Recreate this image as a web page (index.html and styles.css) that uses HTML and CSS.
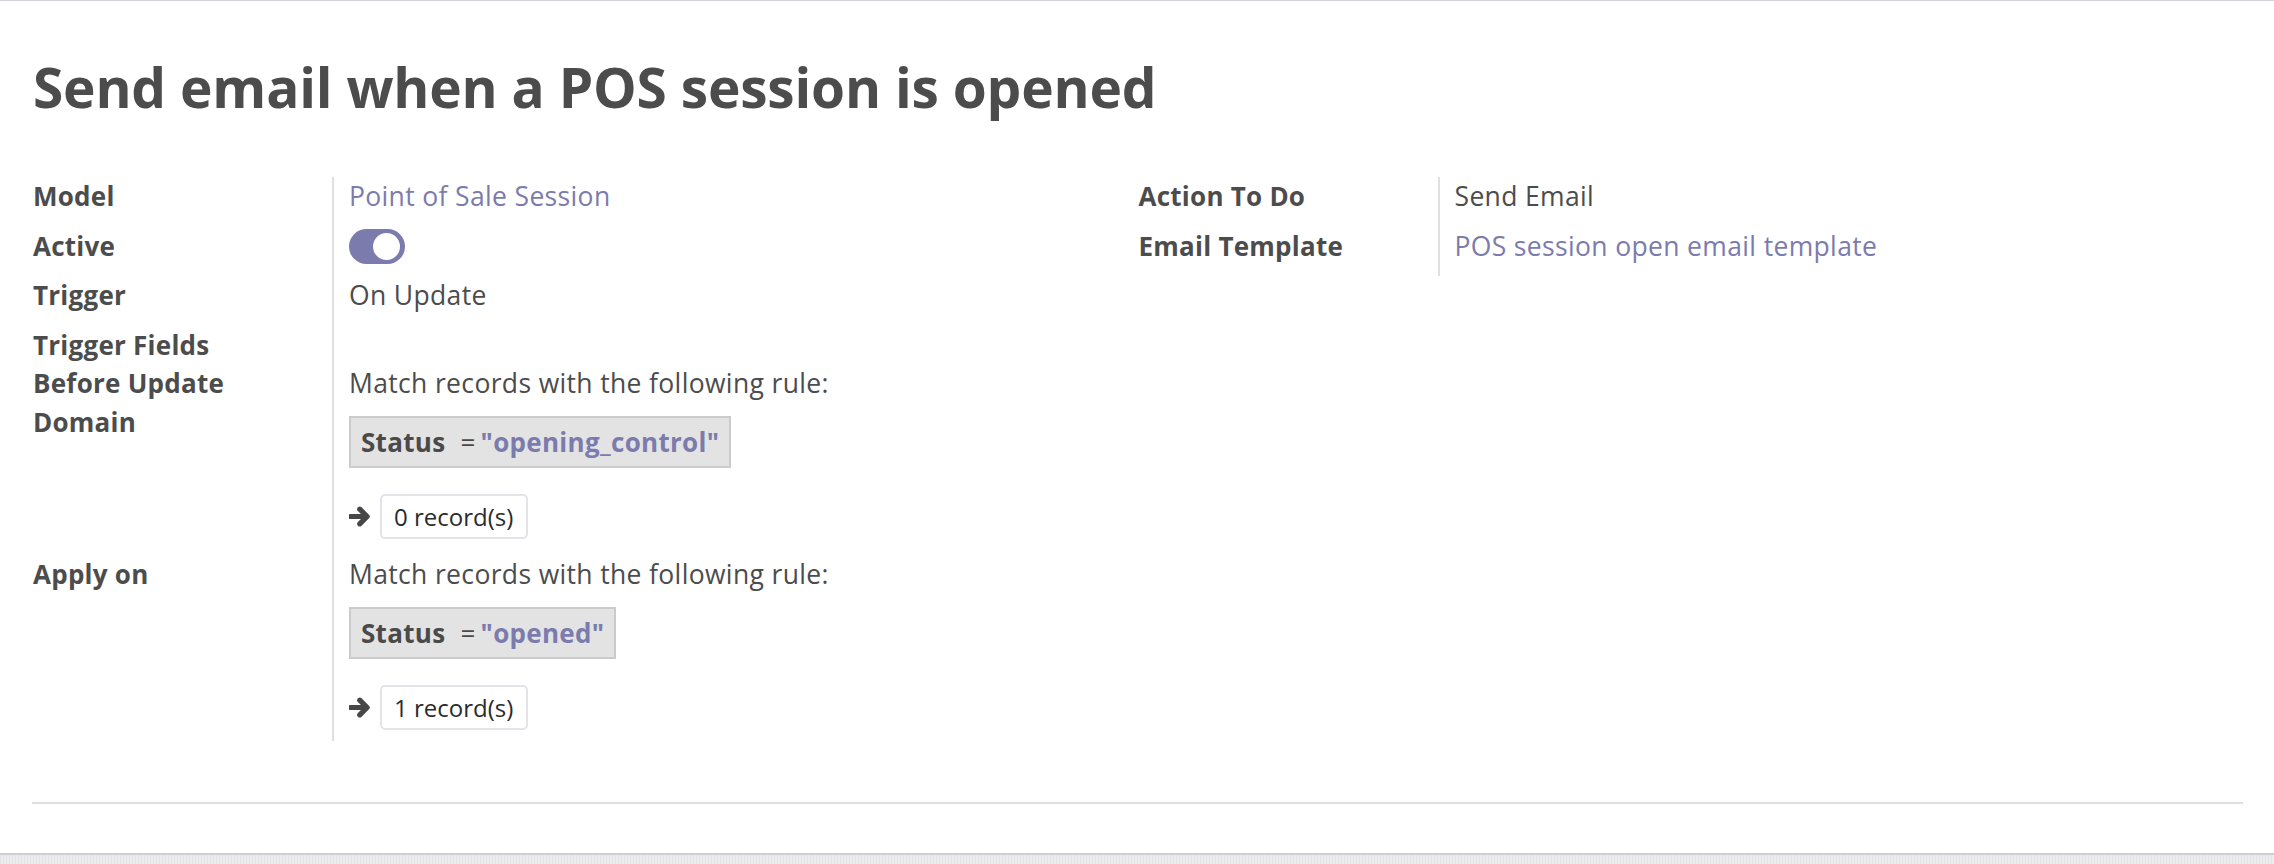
FILE: index.html
```html
<!DOCTYPE html>
<html lang="en">
<head>
<meta charset="utf-8">
<title>Send email when a POS session is opened</title>
<link rel="stylesheet" href="styles.css">
</head>
<body>
<div class="page">
  <div class="sheet">
    <h1 class="title">Send email when a POS session is opened</h1>
    <div class="groups">
      <div class="group group-left">
        <div class="label">Model</div>
        <div class="value"><a class="link">Point of Sale Session</a></div>

        <div class="label">Active</div>
        <div class="value"><span class="toggle"><span class="knob"></span></span></div>

        <div class="label">Trigger</div>
        <div class="value">On Update</div>

        <div class="label short">Trigger Fields</div>
        <div class="value short"></div>

        <div class="label">Before Update<br>Domain</div>
        <div class="value domain-cell">
          <div class="match">Match records with the following rule:</div>
          <div class="domain"><span class="fld">Status</span><span class="op">=</span><span class="val">"opening_control"</span></div>
          <div class="records">
            <svg class="arrow" viewBox="0 0 22 20" width="23" height="21"><path d="M1.5 10 H17 M10.3 3 L17.3 10 L10.3 17" fill="none" stroke="#474747" stroke-width="5" stroke-linecap="round" stroke-linejoin="round"/></svg>
            <span class="btn">0 record(s)</span>
          </div>
        </div>

        <div class="label">Apply on</div>
        <div class="value domain-cell last">
          <div class="match">Match records with the following rule:</div>
          <div class="domain"><span class="fld">Status</span><span class="op">=</span><span class="val">"opened"</span></div>
          <div class="records">
            <svg class="arrow" viewBox="0 0 22 20" width="23" height="21"><path d="M1.5 10 H17 M10.3 3 L17.3 10 L10.3 17" fill="none" stroke="#474747" stroke-width="5" stroke-linecap="round" stroke-linejoin="round"/></svg>
            <span class="btn">1 record(s)</span>
          </div>
        </div>
      </div>

      <div class="group group-right">
        <div class="label">Action To Do</div>
        <div class="value">Send Email</div>

        <div class="label">Email Template</div>
        <div class="value"><a class="link">POS session open email template</a></div>
      </div>
    </div>
    <div class="hr"></div>
  </div>
  <div class="under"></div>
</div>
</body>
</html>
```

FILE: styles.css
```css
* { box-sizing: border-box; }

html, body {
  margin: 0;
  padding: 0;
  background: #ffffff;
  overflow: hidden;
}

body {
  font-family: "Open Sans", "DejaVu Sans", sans-serif;
  color: #4c4c4c;
}

.page {
  height: 864px;
  display: flex;
  flex-direction: column;
  border-top: 1px solid #d3d3d9;
}

.sheet {
  padding: 52px 31px 0 32px;
  height: 852px;
  background: #ffffff;
}

.title {
  margin: 0 0 56px 1px;
  font-size: 55px;
  line-height: 68px;
  letter-spacing: -0.2px;
  font-weight: 700;
  color: #4c4c4c;
}

.groups {
  display: grid;
  grid-template-columns: 1fr 1fr;
  align-items: start;
}

.group {
  display: grid;
  grid-template-columns: 300px 1fr;
  font-size: 26px;
}

.group-left {
  grid-template-rows: 49.5px 49.5px 49.5px 38px auto auto;
}

.group-right {
  grid-template-rows: 49.5px 49.5px;
}

.label {
  font-weight: 700;
  line-height: 39px;
  padding-left: 1px;
  letter-spacing: 0.25px;
  color: #4c4c4c;
}

.value {
  border-left: 2px solid #e0e0e0;
  padding-left: 15px;
  line-height: 39px;
  font-size: 26.5px;
  letter-spacing: 0.35px;
  color: #4c4c4c;
}

.link {
  color: #7c7bad;
  text-decoration: none;
}

.toggle {
  display: block;
  position: relative;
  width: 56px;
  height: 35px;
  margin-top: 2.5px;
  border-radius: 18px;
  background: #7c7bad;
}

.knob {
  position: absolute;
  right: 5px;
  top: 4px;
  width: 27px;
  height: 27px;
  border-radius: 50%;
  background: #ffffff;
}

.domain-cell {
  padding-bottom: 15.5px;
}

.domain-cell.last {
  padding-bottom: 11px;
}

.match {
  line-height: 39px;
}

.domain {
  display: inline-block;
  margin-top: 13.5px;
  height: 52px;
  line-height: 48px;
  padding: 0 10px 0 10px;
  background: #e3e3e3;
  border: 2px solid #cbcbcb;
  font-weight: 700;
  font-size: 26px;
  letter-spacing: 0.3px;
}

.fld {
  color: #4a4a4a;
}

.op {
  font-weight: 400;
  color: #4a4a4a;
  margin: 0 5px 0 15px;
}

.val {
  color: #7c7bad;
}

.records {
  display: flex;
  align-items: center;
  margin-top: 26px;
}

.arrow {
  display: block;
  margin-right: 8px;
}

.btn {
  display: inline-block;
  height: 45px;
  line-height: 41px;
  padding: 0 13px 0 12px;
  border: 2px solid #e2e4e8;
  border-radius: 5px;
  background: #ffffff;
  font-size: 24px;
  letter-spacing: 0;
  color: #2b2b2b;
}

.hr {
  margin-top: 61px;
  height: 2px;
  background: #dfdfe3;
}

.under {
  flex: 1;
  border-top: 2px solid #cdcdd4;
  background: repeating-linear-gradient(90deg, #e2e2e4 0 1px, #ededef 1px 3px);
}
```
